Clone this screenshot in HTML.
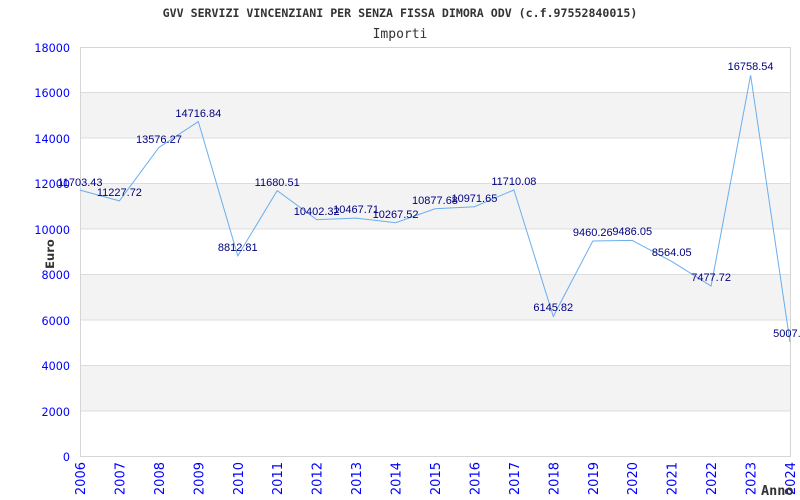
<!DOCTYPE html>
<html><head><meta charset="utf-8"><style>body{margin:0;background:#fff}svg{display:block}</style></head><body>
<svg width="800" height="500" xmlns="http://www.w3.org/2000/svg">
<rect width="800" height="500" fill="#fff"/>
<g fill="#f3f3f3">
<rect x="80" y="92.4" width="710" height="45.4"/>
<rect x="80" y="183.3" width="710" height="45.4"/>
<rect x="80" y="274.2" width="710" height="45.4"/>
<rect x="80" y="365.1" width="710" height="45.4"/>
</g>
<g stroke="#dcdcdc" stroke-width="1">
<line x1="80" y1="92.5" x2="790" y2="92.5"/><line x1="80" y1="138" x2="790" y2="138"/>
<line x1="80" y1="183.5" x2="790" y2="183.5"/><line x1="80" y1="229" x2="790" y2="229"/>
<line x1="80" y1="274.5" x2="790" y2="274.5"/><line x1="80" y1="320" x2="790" y2="320"/>
<line x1="80" y1="365.5" x2="790" y2="365.5"/><line x1="80" y1="411" x2="790" y2="411"/>
</g>
<rect x="80.5" y="47.5" width="710" height="409" fill="none" stroke="#d6d6d6"/>
<text x="400" y="17" font-family="DejaVu Sans Mono, monospace" font-weight="bold" font-size="11.6" fill="#333" text-anchor="middle">GVV SERVIZI VINCENZIANI PER SENZA FISSA DIMORA ODV (c.f.97552840015)</text>
<text x="400" y="38" font-family="DejaVu Sans Mono, monospace" font-size="13" fill="#333" text-anchor="middle">Importi</text>
<g font-family="DejaVu Sans, sans-serif" font-size="11.2" fill="#0000ff" text-anchor="end">
<text x="70" y="52">18000</text><text x="70" y="97">16000</text><text x="70" y="143">14000</text>
<text x="70" y="188">12000</text><text x="70" y="234">10000</text><text x="70" y="279">8000</text>
<text x="70" y="325">6000</text><text x="70" y="370">4000</text><text x="70" y="416">2000</text><text x="70" y="461">0</text>
</g>
<text transform="translate(54,254) rotate(-90)" font-family="DejaVu Sans, sans-serif" font-weight="bold" font-size="11.5" fill="#333" text-anchor="middle">Euro</text>
<g font-family="DejaVu Sans, sans-serif" font-size="13" fill="#0000ff" text-anchor="end">
<text transform="translate(85,462) rotate(-90)">2006</text>
<text transform="translate(124.4,462) rotate(-90)">2007</text>
<text transform="translate(163.9,462) rotate(-90)">2008</text>
<text transform="translate(203.3,462) rotate(-90)">2009</text>
<text transform="translate(242.8,462) rotate(-90)">2010</text>
<text transform="translate(282.2,462) rotate(-90)">2011</text>
<text transform="translate(321.7,462) rotate(-90)">2012</text>
<text transform="translate(361.1,462) rotate(-90)">2013</text>
<text transform="translate(400.6,462) rotate(-90)">2014</text>
<text transform="translate(440,462) rotate(-90)">2015</text>
<text transform="translate(479.4,462) rotate(-90)">2016</text>
<text transform="translate(518.9,462) rotate(-90)">2017</text>
<text transform="translate(558.3,462) rotate(-90)">2018</text>
<text transform="translate(597.8,462) rotate(-90)">2019</text>
<text transform="translate(637.2,462) rotate(-90)">2020</text>
<text transform="translate(676.7,462) rotate(-90)">2021</text>
<text transform="translate(716.1,462) rotate(-90)">2022</text>
<text transform="translate(755.6,462) rotate(-90)">2023</text>
<text transform="translate(795,462) rotate(-90)">2024</text>
</g>
<text x="761" y="495" font-family="DejaVu Sans Mono, monospace" font-weight="bold" font-size="13.5" fill="#333">Anno</text>
<polyline fill="none" stroke="#6aaeee" stroke-width="1" points="80,190.1 119.4,200.9 158.9,147.5 198.3,121.6 237.8,255.8 277.2,190.6 316.7,219.6 356.1,218.1 395.6,222.7 435,208.8 474.4,206.7 513.9,189.9 553.3,316.4 592.8,241 632.2,240.4 671.7,261.4 711.1,286.1 750.6,75.2 790,342.2"/>
<g font-family="Liberation Sans, Arial, sans-serif" font-size="11" fill="#000080" text-anchor="middle">
<text x="80" y="186">11703.43</text><text x="119.4" y="196">11227.72</text><text x="158.9" y="143">13576.27</text>
<text x="198.3" y="117">14716.84</text><text x="237.8" y="251">8812.81</text><text x="277.2" y="186">11680.51</text>
<text x="316.7" y="215">10402.32</text><text x="356.1" y="213">10467.71</text><text x="395.6" y="218">10267.52</text>
<text x="435" y="204">10877.68</text><text x="474.4" y="202">10971.65</text><text x="513.9" y="185">11710.08</text>
<text x="553.3" y="311">6145.82</text><text x="592.8" y="236">9460.26</text><text x="632.2" y="235">9486.05</text>
<text x="671.7" y="256">8564.05</text><text x="711.1" y="281">7477.72</text><text x="750.6" y="70">16758.54</text>
<text x="790" y="337">5007.0</text>
</g>
</svg>
</body></html>
